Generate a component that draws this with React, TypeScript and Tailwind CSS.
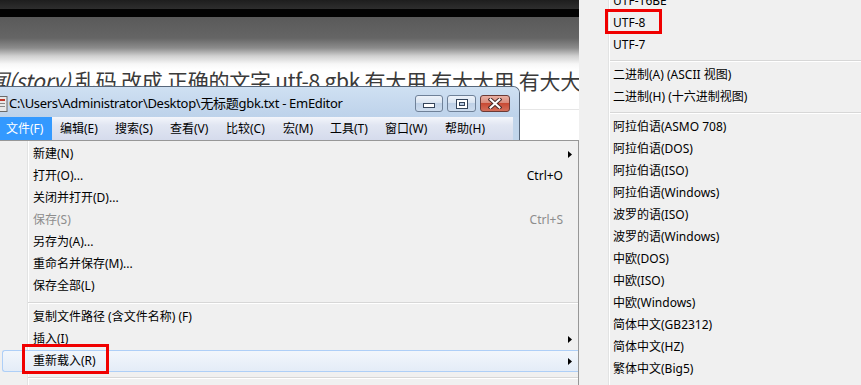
import React from "react";

type Row =
  | { kind: "sep" }
  | {
      kind?: "item";
      label: string;
      shortcut?: string;
      disabled?: boolean;
      sub?: boolean;
      hl?: boolean;
    };

const Arrow = () => (
  <svg width="4" height="7" viewBox="0 0 4 7" className="block">
    <path d="M0 0L4 3.5L0 7Z" fill="#000" />
  </svg>
);

const fileRows: Row[] = [
  { label: "新建(N)", sub: true },
  { label: "打开(O)...", shortcut: "Ctrl+O" },
  { label: "关闭并打开(D)..." },
  { label: "保存(S)", shortcut: "Ctrl+S", disabled: true },
  { label: "另存为(A)..." },
  { label: "重命名并保存(M)..." },
  { label: "保存全部(L)" },
  { kind: "sep" },
  { label: "复制文件路径 (含文件名称) (F)" },
  { label: "插入(I)", sub: true },
  { label: "重新载入(R)", sub: true, hl: true },
  { kind: "sep" },
  { label: "打印(P)...", shortcut: "Ctrl+P" },
];

const encRows: (string | null)[] = [
  "UTF-16BE",
  "UTF-8",
  "UTF-7",
  null,
  "二进制(A) (ASCII 视图)",
  "二进制(H) (十六进制视图)",
  null,
  "阿拉伯语(ASMO 708)",
  "阿拉伯语(DOS)",
  "阿拉伯语(ISO)",
  "阿拉伯语(Windows)",
  "波罗的语(ISO)",
  "波罗的语(Windows)",
  "中欧(DOS)",
  "中欧(ISO)",
  "中欧(Windows)",
  "简体中文(GB2312)",
  "简体中文(HZ)",
  "繁体中文(Big5)",
];

const menuBar: { label: string; w?: string }[] = [
  { label: "编辑(E)", w: "w-[55px]" },
  { label: "搜索(S)", w: "w-[55px]" },
  { label: "查看(V)", w: "w-[56px]" },
  { label: "比较(C)", w: "w-[57px]" },
  { label: "宏(M)", w: "w-[47px]" },
  { label: "工具(T)", w: "w-[55px]" },
  { label: "窗口(W)", w: "w-[60px]" },
  { label: "帮助(H)", w: "w-[60px]" },
];

function CaptionButtons() {
  return (
    <div className="ml-auto mr-[9px] flex gap-[4px] shrink-0">
      <div className="w-[28px] h-[17px] rounded-[3px] border border-[#6f8198] bg-[linear-gradient(to_bottom,#eef3fa_0%,#d9e4f1_45%,#bfd1e7_50%,#cddcee_100%)] flex items-center justify-center">
        <svg width="12" height="6" viewBox="0 0 12 6" className="block mt-[5px]">
          <rect x="0.5" y="0.5" width="11" height="4" fill="#fff" stroke="#34445a" />
        </svg>
      </div>
      <div className="w-[29px] h-[17px] rounded-[3px] border border-[#6f8198] bg-[linear-gradient(to_bottom,#eef3fa_0%,#d9e4f1_45%,#bfd1e7_50%,#cddcee_100%)] flex items-center justify-center">
        <svg width="12" height="10" viewBox="0 0 12 10" className="block">
          <rect x="0.5" y="0.5" width="11" height="9" fill="#fff" stroke="#34445a" />
          <rect x="3.5" y="3.5" width="5" height="3" fill="#b9cbe2" stroke="#34445a" />
        </svg>
      </div>
      <div className="w-[30px] h-[17px] rounded-[3px] border border-[#6b3a36] bg-[linear-gradient(to_bottom,#eab0a4_0%,#d98a7a_45%,#c84a34_50%,#d3705c_100%)] flex items-center justify-center">
        <svg width="14" height="11" viewBox="0 0 14 11" className="block">
          <path d="M2.5 1.5L11.5 9.5M11.5 1.5L2.5 9.5" stroke="#4a2a28" strokeWidth="4" strokeLinecap="square" />
          <path d="M2.5 1.5L11.5 9.5M11.5 1.5L2.5 9.5" stroke="#fff" strokeWidth="2" strokeLinecap="square" />
        </svg>
      </div>
    </div>
  );
}

function AppIcon() {
  return (
    <svg width="8" height="16" viewBox="0 0 8 16" className="block shrink-0">
      <rect x="-6" y="0.5" width="13" height="15" fill="#e9e9e9" stroke="#6b6b6b" />
      <rect x="-4" y="3" width="9" height="2" fill="#c0392b" />
      <rect x="-4" y="7" width="9" height="1" fill="#8a8a8a" />
      <rect x="-4" y="10" width="9" height="1" fill="#8a8a8a" />
    </svg>
  );
}

function FileMenu() {
  return (
    <div className="flex-1 border-t border-r border-[#979797] bg-[#f0f0f0] bg-[linear-gradient(to_right,transparent_27px,#e2e3e3_27px,#e2e3e3_28px,#ffffff_28px,#ffffff_29px,transparent_29px)] pt-[2px] flex flex-col">
      {fileRows.map((r, i) => {
        if (r.kind === "sep") {
          return (
            <div key={i} className="h-[9px] pt-[5px] ml-[28px] shrink-0">
              <div className="h-[1px] bg-[#d7d7d7]" />
              <div className="h-[1px] bg-[#ffffff]" />
            </div>
          );
        }
        const color = r.disabled ? "text-[#8d8d8d]" : "text-black";
        if (r.hl) {
          return (
            <div
              key={i}
              className="relative shrink-0 h-[22px] ml-[2px] pl-[30px] pr-[6px] flex items-center rounded-l-[3px] border border-r-0 border-[#aecff7] bg-[linear-gradient(to_bottom,#f2f6fb,#e4ecf7)]"
            >
              <span className={color}>{r.label}</span>
              <div className="ml-auto">{r.sub && <Arrow />}</div>
              <div className="absolute left-[19px] top-[-7px] w-[87px] h-[30px] border-[3px] border-[#f00000]" />
            </div>
          );
        }
        return (
          <div key={i} className="shrink-0 h-[22px] pl-[33px] pr-[6px] flex items-center">
            <span className={color}>{r.label}</span>
            <span className={`ml-auto ${color}`}>{r.shortcut ?? ""}</span>
            <div className="w-[4px] ml-[5px]">{r.sub && <Arrow />}</div>
          </div>
        );
      })}
    </div>
  );
}

function EncodingMenu() {
  return (
    <div className="flex-1 bg-[#f0f0f0] bg-[linear-gradient(to_right,transparent_29px,#e2e3e3_29px,#e2e3e3_30px,#ffffff_30px,#ffffff_31px,transparent_31px)]">
      <div className="-mt-[10px] flex flex-col">
        {encRows.map((r, i) => {
          if (r === null) {
            return (
              <div key={i} className="h-[8px] pt-[4px] ml-[31px] shrink-0">
                <div className="h-[1px] bg-[#d7d7d7]" />
                <div className="h-[1px] bg-[#ffffff]" />
              </div>
            );
          }
          return (
            <div key={i} className="relative shrink-0 h-[22px] pl-[34px] flex items-center whitespace-nowrap">
              <span>{r}</span>
              {r === "UTF-8" && (
                <div className="absolute left-[26px] top-[-3px] w-[57px] h-[25px] border-[3px] border-[#f00000]" />
              )}
            </div>
          );
        })}
      </div>
    </div>
  );
}

export default function App() {
  return (
    <div className="w-[861px] h-[385px] overflow-hidden bg-white flex font-['Noto_Sans','Noto_Sans_CJK_SC',sans-serif] text-[12px] text-black">
      <div className="w-[579px] shrink-0 flex flex-col">
        {/* backdrop */}
        <div className="h-[86px] shrink-0 bg-[linear-gradient(to_bottom,#1e1e1e_0px,#2e2e2e_9px,#030303_9px,#030303_17px,#5a5a5a_17px,#656565_38px,#8c8c8c_48px,#d0d0d0_56px,#f7f7f7_64px,#ffffff_70px)]">
          <div className="pt-[67px] -ml-[12px] whitespace-nowrap text-[21px] leading-[26px] tracking-[-0.25px] text-[#3a3a3a] font-['Noto_Sans_CJK_SC',sans-serif]">
            <span className="italic">闻(story)</span> 乱码 改成 正确的文字 utf-8 gbk 有大用 有大大用 有大大大用
          </div>
        </div>
        {/* window row */}
        <div className="flex h-[54px] shrink-0">
          <div className="relative z-10 w-[520px] flex flex-col border-t border-r border-[#56667a] rounded-tr-[7px] bg-[#c1d5eb]">
            <div className="h-[30px] flex items-center pt-[3px] rounded-tr-[6px] bg-[linear-gradient(to_bottom,#cfe0f2,#bdd2ea)]">
              <AppIcon />
              <span className="ml-[1px] text-[13px] tracking-[-0.3px] whitespace-nowrap font-['Noto_Sans','Noto_Sans_CJK_SC',sans-serif]">
                C:\Users\Administrator\Desktop\无标题gbk.txt - EmEditor
              </span>
              <CaptionButtons />
            </div>
            <div className="h-[23px] w-[513px] flex bg-[linear-gradient(to_bottom,#f4f6fb_0%,#e1e6f2_35%,#d5dbec_100%)]">
              <div className="w-[52px] pl-[6px] flex items-center bg-[#3399ff] text-white">文件(F)</div>
              {menuBar.map((m) => (
                <div key={m.label} className={`${m.w} pl-[8px] flex items-center whitespace-nowrap`}>
                  {m.label}
                </div>
              ))}
            </div>
          </div>
          <div className="flex-1">
            <div className="h-[24px] border-b border-[#e6e6e6]" />
          </div>
        </div>
        <FileMenu />
      </div>
      <EncodingMenu />
    </div>
  );
}
